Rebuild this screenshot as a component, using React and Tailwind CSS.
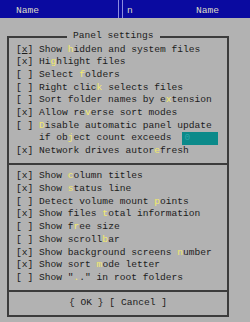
const rowsA = [
  ['[x] Show ', 'h', 'idden and system files'],
  ['[x] Hi', 'g', 'hlight files'],
  ['[ ] Select ', 'f', 'olders'],
  ['[ ] Right clic', 'k', ' selects files'],
  ['[ ] Sort folder names by e', 'x', 'tension'],
  ['[x] Allow re', 'v', 'erse sort modes'],
  ['[ ] ', 'D', 'isable automatic panel update'],
]

const rowsB = [
  ['[x] Show ', 'c', 'olumn titles'],
  ['[x] Show ', 's', 'tatus line'],
  ['[ ] Detect volume mount ', 'p', 'oints'],
  ['[x] Show files ', 't', 'otal information'],
  ['[ ] Show f', 'r', 'ee size'],
  ['[ ] Show scroll', 'b', 'ar'],
  ['[x] Show background screens ', 'n', 'umber'],
  ['[x] Show sort ', 'm', 'ode letter'],
  ['[ ] Show "', '.', '." in root folders'],
]

function Row({ r }) {
  return (
    <div className="h-[12.7px] leading-[12.7px] whitespace-pre">
      {r[0]}<span className="text-[#f2ea6a]">{r[1]}</span>{r[2]}
    </div>
  )
}

function Sep() {
  return (
    <div className="h-[12.7px] flex items-center -ml-[7px]">
      <div className="h-[2px] w-[218px] bg-[#3c3c3c]" />
    </div>
  )
}

export default function App() {
  return (
    <div className="w-[250px] h-[322px] overflow-hidden bg-[#b2b2b2] text-[#1c1c1c]" style={{ fontFamily: '"Liberation Mono", "DejaVu Sans Mono", monospace', fontSize: '9.6px' }}>
      {/* panels behind */}
      <div className="h-[18px] bg-[#0a0aa0] text-[#dcdcc8]">
        <div className="flex h-full items-end">
          <div className="w-[118px] pl-[16px] pb-[1px] leading-[12px]">Name</div>
          <div className="w-[1px] h-full bg-[#8c8ce0]" />
          <div className="w-[3px]" />
          <div className="w-[1px] h-full bg-[#8c8ce0]" />
          <div className="w-[73px] pl-[4px] pb-[1px] leading-[12px]">n</div>
          <div className="pb-[1px] leading-[12px]">Name</div>
        </div>
      </div>

      {/* dialog */}
      <div className="pt-[18px] pl-[7px]">
        <div className="relative w-[222px] border-2 border-[#3c3c3c] pl-[7px] pt-[5.5px]">
          <div className="absolute left-[58px] -top-[8px] bg-[#b2b2b2] px-[6px] leading-[12.7px] whitespace-pre">Panel settings</div>
          {rowsA.map((r, i) => (
            <div key={i} className="h-[12.7px] leading-[12.7px] whitespace-pre">
              {i === 0 ? <>[<span className="underline">x</span>] Show </> : r[0]}
              <span className="text-[#f2ea6a]">{r[1]}</span>{r[2]}
            </div>
          ))}
          <div className="h-[12.7px] leading-[12.7px] whitespace-pre flex">
            <span>{'    if ob'}<span className="text-[#f2ea6a]">j</span>{'ect count exceeds'}</span>
            <div className="ml-[11px] w-[36px] h-[13px] bg-[#0b8a8a] text-[#2aa8a8] pl-[2px]">0</div>
          </div>
          <Row r={['[x] Network drives autor', 'e', 'fresh']} />
          <Sep />
          {rowsB.map((r, i) => <Row key={i} r={r} />)}
          <Sep />
          <div className="h-[12.7px] leading-[12.7px] whitespace-pre text-center pr-[7px]">{'{ OK } [ Cancel ]'}</div>
          <div className="h-[5px]" />
        </div>
      </div>
    </div>
  )
}
